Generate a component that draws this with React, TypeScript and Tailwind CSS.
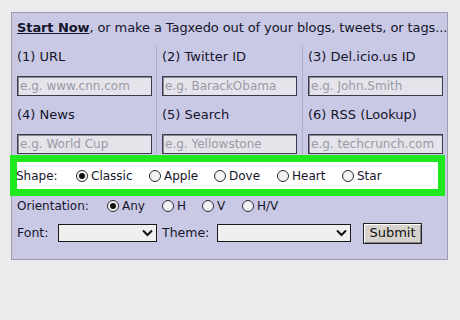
import React from "react";

const font = { fontFamily: '"DejaVu Sans", Verdana, sans-serif' };

function Radio({ checked = false }: { checked?: boolean }) {
  return (
    <span className="flex h-[12px] w-[12px] shrink-0 items-center justify-center rounded-full border border-[#2a2a3a] bg-[#f4f4f4]">
      {checked && <span className="h-[6px] w-[6px] rounded-full bg-[#111]" />}
    </span>
  );
}

function Option({ label, w, checked = false }: { label: string; w: string; checked?: boolean }) {
  return (
    <span className={`flex ${w} shrink-0 items-center gap-[3px]`}>
      <Radio checked={checked} />
      {label}
    </span>
  );
}

function Field({ label, placeholder, last }: { label: string; placeholder: string; last: boolean }) {
  return (
    <div className={last ? "pl-[5px] pb-px" : "pl-[5px] pb-[7px]"}>
      <div className="flex h-[24px] items-center text-[13px] text-[#15152a]">{label}</div>
      <div className="mt-[7px] flex h-[20px] w-[135px] items-center border border-[#3a3a4a] bg-[#e4e4ea] pl-[2px] text-[12px] text-[#9a9aa6] shadow-[inset_1px_1px_0_#8a8a96]">
        {placeholder}
      </div>
    </div>
  );
}

function Select({ w }: { w: string }) {
  return (
    <div className={`flex h-[18px] ${w} shrink-0 items-center justify-end border border-[#1a1a1a] bg-[#efefef] pr-[3px]`}>
      <svg width="11" height="8" viewBox="0 0 11 8">
        <path d="M1 1.5 L5.5 6 L10 1.5" fill="none" stroke="#111" strokeWidth="2" />
      </svg>
    </div>
  );
}

export default function App() {
  const fields = [
    ["(1) URL", "e.g. www.cnn.com"],
    ["(2) Twitter ID", "e.g. BarackObama"],
    ["(3) Del.icio.us ID", "e.g. John.Smith"],
    ["(4) News", "e.g. World Cup"],
    ["(5) Search", "e.g. Yellowstone"],
    ["(6) RSS (Lookup)", "e.g. techcrunch.com"],
  ];

  return (
    <div className="h-[320px] w-[460px] overflow-hidden bg-[#ebebeb] pt-[12px] pl-[11px]" style={font}>
      <div className="h-[248px] w-[437px] border border-[#9c9cac] bg-[#c9c9e6] text-[#15152a]">
        <div className="flex h-[30px] items-center overflow-hidden whitespace-nowrap pl-[5px] text-[13px] tracking-[-0.1px]">
          <span className="font-bold underline">Start Now</span>
          <span>, or make a Tagxedo out of your blogs, tweets, or tags...</span>
        </div>

        <div className="mt-[2px] grid grid-cols-[145px_146px_144px]">
          {fields.map(([label, ph], i) => (
            <div key={label} className={i % 3 === 2 ? "" : "border-r border-[#aeaec8]"}>
              <Field label={label} placeholder={ph} last={i > 2} />
            </div>
          ))}
        </div>

        <div className="-ml-[2px] h-[41px] w-[435px] border-[7px] border-[#1fe81f] bg-white">
          <div className="flex h-full items-center whitespace-nowrap text-[12px]">
            <span className="ml-[-1px] w-[60px] shrink-0">Shape:</span>
            <Option label="Classic" w="w-[73px]" checked />
            <Option label="Apple" w="w-[65px]" />
            <Option label="Dove" w="w-[63px]" />
            <Option label="Heart" w="w-[65px]" />
            <Option label="Star" w="w-[50px]" />
          </div>
        </div>

        <div className="flex h-[20px] items-center whitespace-nowrap pl-[5px] text-[12px]">
          <span className="w-[90px] shrink-0">Orientation:</span>
          <Option label="Any" w="w-[55px]" checked />
          <Option label="H" w="w-[40px]" />
          <Option label="V" w="w-[40px]" />
          <Option label="H/V" w="w-[50px]" />
        </div>

        <div className="mt-[6px] flex h-[22px] items-center whitespace-nowrap pl-[5px] text-[12.5px]">
          <span className="w-[41px] shrink-0">Font:</span>
          <Select w="w-[99px]" />
          <span className="ml-[5px] w-[55px] shrink-0">Theme:</span>
          <Select w="w-[134px]" />
          <button className="ml-[12px] flex h-[21px] w-[59px] shrink-0 items-center justify-center border border-[#222] bg-[#d6d3cc] text-[13px] text-[#111] shadow-[inset_1px_1px_0_#fff,inset_-1px_-1px_0_#888]">
            Submit
          </button>
        </div>
      </div>
    </div>
  );
}
